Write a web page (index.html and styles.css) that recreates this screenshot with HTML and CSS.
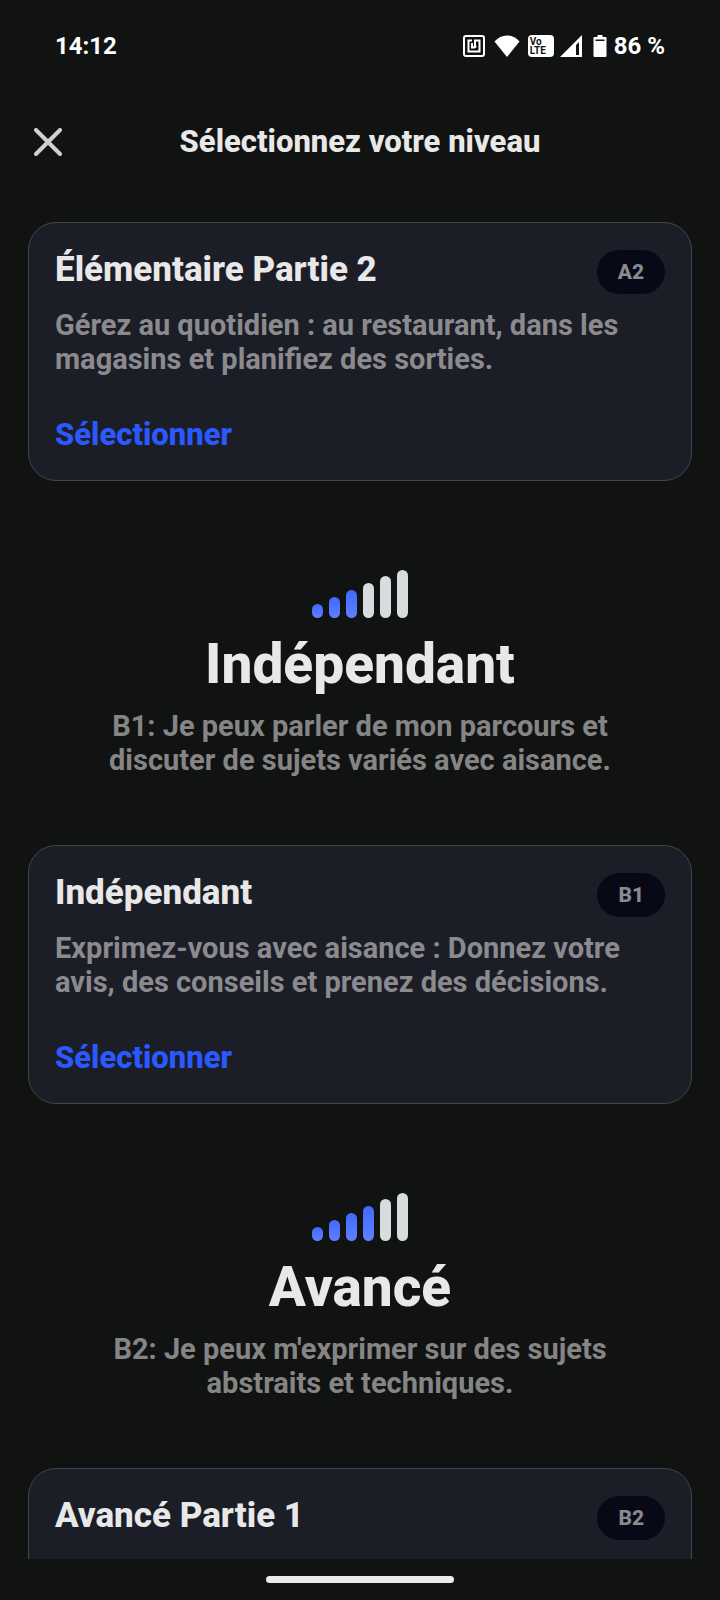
FILE: index.html
```html
<!DOCTYPE html>
<html lang="fr">
<head>
  <meta charset="UTF-8" />
  <meta name="viewport" content="width=device-width, initial-scale=1.0"/>
  <title>Sélectionnez votre niveau</title>
  <link rel="stylesheet" href="styles.css">
</head>
<body>
  <div class="status-bar">
    <span>14:12</span>
    <div class="status-icons">
      <!-- NFC -->
      <svg width="22" height="22" viewBox="0 0 22 22" fill="none" stroke="#fff">
        <rect x="1" y="1" width="20" height="20" rx="2" stroke-width="2"/>
        <path d="M9 5.500H5.500v11h11v-11H12v6" stroke-width="2"/>
        <path d="M9 8v4.500h3" stroke-width="2"/>
        <circle cx="12" cy="11.500" r="1.500" fill="#fff" stroke="none"/>
      </svg>
      <!-- Wifi -->
      <svg class="wifi" width="26" height="22" viewBox="0 0 26 22">
        <path d="M13 22L.5 6.500C4 2.500 8 .5 13 .5s9 2 12.500 6z" fill="#fff"/>
      </svg>
      <div class="volte">Vo<br>LTE</div>
      <!-- Réseau -->
      <svg class="network" width="22" height="22" viewBox="0 0 22 22">
        <path fill-rule="evenodd" d="M22 0v22H0zM19 7v13h-3V10z" fill="#fff"/>
      </svg>
      <!-- Batterie -->
      <svg class="battery" width="14" height="22" viewBox="0 0 14 22">
        <path fill-rule="evenodd" d="M4.500 0h5v2H12.500q1 0 1 1v18q0 1-1 1h-11q-1 0-1-1V3q0-1 1-1h3zM2.500 4.500v1.500h9V4.500z" fill="#fff"/>
      </svg>
      <span>86 %</span>
    </div>
  </div>

  <header class="header">
    <button class="close" type="button" aria-label="Fermer">
      <svg width="28" height="28" viewBox="0 0 28 28" stroke="#d0d0d0" stroke-width="4" stroke-linecap="round">
        <path d="M2 2l24 24M26 2L2 26"/>
      </svg>
    </button>
    <h1>Sélectionnez votre niveau</h1>
  </header>

  <main class="levels">
    <article class="card">
      <div class="card-head">
        <h3>Élémentaire Partie 2</h3>
        <span class="badge">A2</span>
      </div>
      <p>Gérez au quotidien : au restaurant, dans les magasins et planifiez des sorties.</p>
      <button class="select" type="button">Sélectionner</button>
    </article>

    <section class="level">
      <div class="bars">
        <i class="on"></i><i class="on"></i><i class="on"></i><i></i><i></i><i></i>
      </div>
      <h2>Indépendant</h2>
      <p>B1: Je peux parler de mon parcours et discuter de sujets variés avec aisance.</p>
    </section>

    <article class="card">
      <div class="card-head">
        <h3>Indépendant</h3>
        <span class="badge">B1</span>
      </div>
      <p>Exprimez-vous avec aisance : Donnez votre avis, des conseils et prenez des décisions.</p>
      <button class="select" type="button">Sélectionner</button>
    </article>

    <section class="level">
      <div class="bars">
        <i class="on"></i><i class="on"></i><i class="on"></i><i class="on"></i><i></i><i></i>
      </div>
      <h2>Avancé</h2>
      <p>B2: Je peux m'exprimer sur des sujets abstraits et techniques.</p>
    </section>

    <article class="card">
      <div class="card-head">
        <h3>Avancé Partie 1</h3>
        <span class="badge">B2</span>
      </div>
    </article>
  </main>

  <div class="nav-bar"><span></span></div>
</body>
</html>
```
FILE: styles.css
```css
* { box-sizing: border-box; margin:0; padding:0; }
body {
  display:flex; flex-direction:column;
  height:100vh; overflow:hidden;
  font-family: Roboto, sans-serif; font-weight:700;
  background:#111312; color:#e8e8e8;
}
button { font:inherit; background:none; border:0; cursor:pointer; }
svg { display:block; }

.status-bar {
  display:flex; justify-content:space-between; align-items:center;
  height:92px; padding:0 55px;
  color:#fff; font-size:24px;
}
.status-icons { display:flex; align-items:center; }
.wifi { margin-left:9px; }
.volte {
  width:26px; height:22px; margin-left:8px; padding:2px;
  background:#fff; color:#111312; border-radius:4px;
  font-size:10px; line-height:9px;
}
.network { margin-left:6px; }
.battery { margin:0 7px 0 11px; }

.header {
  display:grid; grid-template-columns:40px 1fr 40px; align-items:center;
  height:100px; padding:0 28px;
}
.close { display:grid; place-items:center; width:40px; height:40px; }
h1, h2, h3, .badge, .select { font-weight:800; }
h1 { font-size:31px; line-height:36px; text-align:center; }

.levels { flex:1; min-height:0; padding:30px 28px 0; overflow:hidden; }
.card {
  min-height:259px; padding:27px 26px;
  background:#1c1e27; border:1px solid #45464a; border-radius:28px;
}
.card-head {
  display:flex; justify-content:space-between; align-items:flex-start;
  margin-bottom:14px;
}
h3 { font-size:35px; line-height:40px; }
.badge {
  padding:0 21px; border-radius:22px;
  background:#070a16; color:#8b8b8f;
  font-size:21px; line-height:44px;
}
p { color:#8b8b8f; font-size:29px; line-height:34px; }
.select {
  display:block; margin-top:41px;
  color:#2a59ff; font-size:31px; line-height:36px;
}

.level { padding:89px 72px 68px; text-align:center; }
.level p { color:#858585; }
h2 { margin:14px 0 13px; font-size:55px; line-height:64px; }
.bars {
  display:flex; justify-content:center; align-items:flex-end; gap:6px;
  height:48px;
}
.bars i { width:11px; border-radius:6px; background:#d8dcdf; }
.bars .on { background:linear-gradient(#4169ff, #5f80ff); }
.bars i:nth-child(1) { height:14px; }
.bars i:nth-child(2) { height:21px; }
.bars i:nth-child(3) { height:28px; }
.bars i:nth-child(4) { height:35px; }
.bars i:nth-child(5) { height:42px; }
.bars i:nth-child(6) { height:48px; }

.nav-bar { display:flex; justify-content:center; height:41px; padding-top:17px; }
.nav-bar span { width:26%; height:7px; border-radius:4px; background:#ebebeb; }
```
